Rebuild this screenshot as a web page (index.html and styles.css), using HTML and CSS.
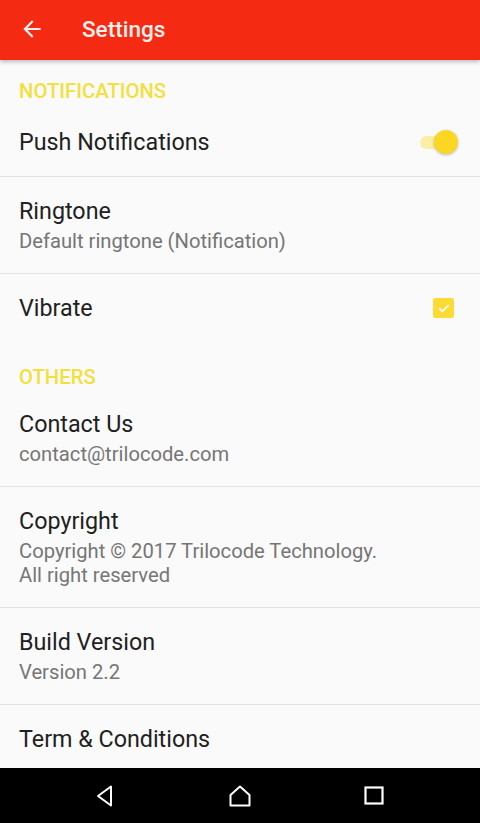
FILE: index.html
```html
<!DOCTYPE html>
<html lang="en">
<head>
  <meta charset="UTF-8">
  <title>Settings</title>
  <link rel="stylesheet" href="styles.css">
</head>
<body>
  <div class="screen">
    <header class="toolbar">
      <svg class="back" viewBox="0 0 24 24" width="26" height="26">
        <path d="M20 11H7.83l5.59-5.59L12 4l-8 8 8 8 1.41-1.41L7.83 13H20v-2z" fill="currentColor"/>
      </svg>
      <span class="toolbar-title">Settings</span>
    </header>

    <main class="prefs">
      <div class="category">NOTIFICATIONS</div>

      <div class="pref pref-switch divided">
        <div class="pref-text">
          <div class="pref-title">Push Notifications</div>
        </div>
        <div class="switch on"><span class="track"></span><span class="thumb"></span></div>
      </div>

      <div class="pref divided">
        <div class="pref-text">
          <div class="pref-title">Ringtone</div>
          <div class="pref-summary">Default ringtone (Notification)</div>
        </div>
      </div>

      <div class="pref">
        <div class="pref-text">
          <div class="pref-title">Vibrate</div>
        </div>
        <div class="checkbox">
          <svg viewBox="0 0 24 24" width="16" height="16">
            <path d="M5 12.5l4.5 4.5L19 7.5" fill="none" stroke="#fff" stroke-width="2.6"/>
          </svg>
        </div>
      </div>

      <div class="category">OTHERS</div>

      <div class="pref divided">
        <div class="pref-text">
          <div class="pref-title">Contact Us</div>
          <div class="pref-summary">contact@trilocode.com</div>
        </div>
      </div>

      <div class="pref divided">
        <div class="pref-text">
          <div class="pref-title">Copyright</div>
          <div class="pref-summary">Copyright © 2017 Trilocode Technology.<br>All right reserved</div>
        </div>
      </div>

      <div class="pref divided">
        <div class="pref-text">
          <div class="pref-title">Build Version</div>
          <div class="pref-summary">Version 2.2</div>
        </div>
      </div>

      <div class="pref">
        <div class="pref-text">
          <div class="pref-title">Term &amp; Conditions</div>
        </div>
      </div>
    </main>

    <nav class="navbar">
      <svg class="nav-btn" viewBox="0 0 24 24" width="24" height="24">
        <path d="M17 2.5v19L4 12z" fill="none" stroke="#fff" stroke-width="2" stroke-linejoin="round"/>
      </svg>
      <svg class="nav-btn" viewBox="0 0 24 24" width="24" height="24">
        <path d="M2.5 11L12 2.5 21.5 11v10.5h-19z" fill="none" stroke="#fff" stroke-width="2" stroke-linejoin="round"/>
      </svg>
      <svg class="nav-btn" viewBox="0 0 24 24" width="24" height="24">
        <rect x="3.5" y="3.5" width="17" height="16" fill="none" stroke="#fff" stroke-width="2.2"/>
      </svg>
    </nav>
  </div>
</body>
</html>
```

FILE: styles.css
```css
* {
  box-sizing: border-box;
}

html, body {
  margin: 0;
  height: 100%;
}

body {
  font-family: Roboto, 'Noto Sans', sans-serif;
  background-color: #fafafa;
}

.screen {
  display: flex;
  flex-direction: column;
  height: 823px;
  overflow: hidden;
}

.toolbar {
  display: flex;
  align-items: center;
  height: 60px;
  flex-shrink: 0;
  padding-left: 19px;
  background-color: #f52a13;
  color: #fdf0ec;
  box-shadow: 0 2px 4px rgba(0, 0, 0, 0.25);
  position: relative;
  z-index: 1;
}

.back {
  display: block;
  margin-top: -2px;
}

.toolbar-title {
  margin-left: 37px;
  font-size: 22.5px;
  font-weight: 500;
  margin-top: -2px;
}

.prefs {
  flex: 1;
  overflow: hidden;
}

.category {
  padding: 21px 19px 3px;
  line-height: 20px;
  font-size: 20.3px;
  font-weight: 500;
  color: #f3e03c;
}

.pref {
  display: flex;
  align-items: center;
  padding: 16px 22px 20px 19px;
}

.pref-switch {
  padding-top: 20px;
  padding-bottom: 16px;
}

.pref.divided {
  border-bottom: 1px solid #e2e2e2;
}

.pref-text {
  flex: 1;
}

.pref-title {
  font-size: 23.3px;
  line-height: 36px;
  color: #212121;
}

.pref-summary {
  font-size: 20.2px;
  line-height: 24px;
  color: #767676;
}

.switch {
  position: relative;
  width: 38px;
  height: 24px;
}

.switch .track {
  position: absolute;
  left: 0;
  right: 6px;
  top: 6px;
  height: 13px;
  border-radius: 7px;
  background-color: #fbefa6;
}

.switch .thumb {
  position: absolute;
  right: 0;
  top: 0;
  width: 24px;
  height: 24px;
  border-radius: 50%;
  background-color: #fbd623;
  box-shadow: 0 1px 3px rgba(0, 0, 0, 0.25);
}

.checkbox {
  display: flex;
  align-items: center;
  justify-content: center;
  width: 21px;
  height: 20px;
  margin-right: 4px;
  border-radius: 2px;
  background-color: #fcdc34;
}

.navbar {
  display: flex;
  align-items: center;
  justify-content: center;
  gap: 110px;
  height: 55px;
  flex-shrink: 0;
  background-color: #000;
}

.nav-btn {
  display: block;
}
```
